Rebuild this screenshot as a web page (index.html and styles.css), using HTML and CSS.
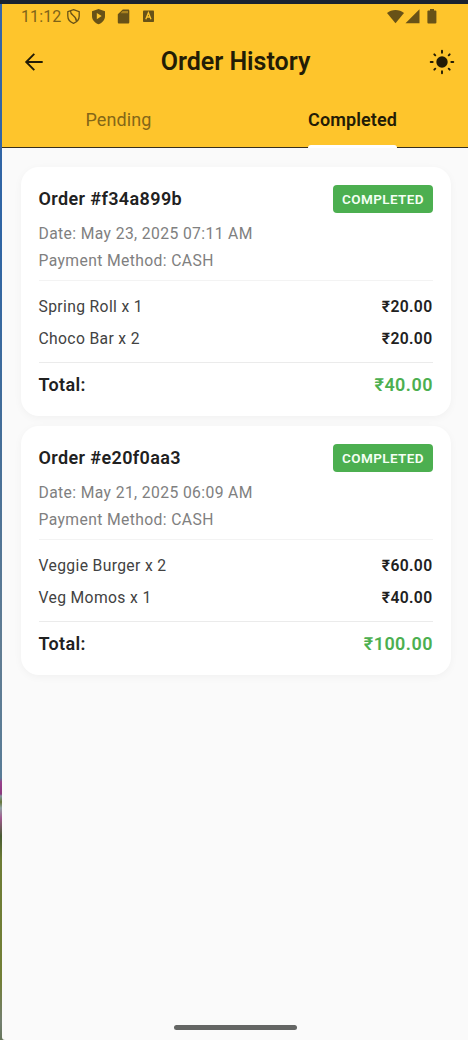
FILE: index.html
```html
<!DOCTYPE html>
<html lang="en">
<head>
<meta charset="utf-8">
<title>Order History</title>
<link rel="stylesheet" href="styles.css">
</head>
<body>
<div class="desktop">
<div class="phone">
  <header class="app-bar">
    <div class="status-bar">
      <span class="clock">11:12</span>
      <svg class="status-left" width="90" height="18" viewBox="0 0 90 18">
        <path d="M7.500 1.600 13.200 3.700V8c0 3.400-2.300 6.100-5.700 7.300C4.100 14.100 1.800 11.400 1.800 8V3.700z" fill="none" stroke="currentColor" stroke-width="1.300"/>
        <path d="M4.500 3c-.6 4.500 6.500 4.500 5.800 10" fill="none" stroke="currentColor" stroke-width="1.300"/>
        <path d="M32.500.9 39 3.300V8c0 3.800-2.700 7-6.500 8.200C28.700 15 26 11.800 26 8V3.300z" fill="currentColor"/>
        <path d="M30.800 5v6.200l4.900-3.100z" fill="#fec52c"/>
        <path d="M56.800 1.500h5.200c.8 0 1.300.5 1.300 1.300v11.400c0 .8-.5 1.300-1.300 1.300h-8.900c-.8 0-1.300-.5-1.300-1.300V6.200z" fill="currentColor"/>
        <path d="M56.500 3h5.500v2.300H54.500z" fill="#a98220"/>
        <rect x="77" y="2.500" width="11" height="11.500" rx=".8" fill="currentColor"/>
        <path d="m79.800 11.200 2.600-6.500 2.600 6.500M80.800 9h3.200" fill="none" stroke="#fec52c" stroke-width="1.300"/>
      </svg>
      <svg class="status-right" width="51" height="16" viewBox="0 0 51 16">
        <path d="M0 4C4.500.1 12.500.1 17 4L8.500 14.300z" fill="currentColor"/>
        <path d="M18.500 14.200 32.500.3v13.900z" fill="currentColor"/>
        <path d="M43 0h4v1.400h1.500c.5 0 .9.400.9.900v11.200c0 .5-.4.900-.9.900h-7.200c-.5 0-.9-.4-.9-.9V2.300c0-.5.400-.9.900-.9H43z" fill="currentColor"/>
      </svg>
    </div>
    <div class="toolbar">
      <svg class="back" width="20" height="20" viewBox="0 0 20 20"><path d="M10.300 1.900 2.200 10l8.100 8.100M2.500 10H18.700" fill="none" stroke="currentColor" stroke-width="1.900"/></svg>
      <h1 class="title">Order History</h1>
      <svg class="sun" width="26" height="26" viewBox="-13 -13 26 26">
        <circle r="5.700" fill="currentColor"/>
        <path d="M0-11.300V-9.300M0 9.300v2M-11.300 0H-9.300M9.300 0h2M-7.700-7.700-6.700-6.700M6.700 6.700l1 1M-7.700 7.700-6.700 6.700M6.700-6.700l1-1" stroke="currentColor" stroke-width="1.900" stroke-linecap="round"/>
      </svg>
    </div>
    <nav class="tabs">
      <div class="tab"><span class="tab-label">Pending</span></div>
      <div class="tab tab-active"><span class="tab-label">Completed</span></div>
    </nav>
  </header>
  <main class="orders">
    <article class="card">
      <div class="row head"><h2 class="order-id">Order #f34a899b</h2><span class="badge">COMPLETED</span></div>
      <p class="meta">Date: May 23, 2025 07:11 AM</p>
      <p class="meta">Payment Method: CASH</p>
      <div class="items">
        <div class="row item"><span>Spring Roll x 1</span><span class="price">₹20.00</span></div>
        <div class="row item"><span>Choco Bar x 2</span><span class="price">₹20.00</span></div>
      </div>
      <div class="row total"><span>Total:</span><span class="amount">₹40.00</span></div>
    </article>
    <article class="card">
      <div class="row head"><h2 class="order-id">Order #e20f0aa3</h2><span class="badge">COMPLETED</span></div>
      <p class="meta">Date: May 21, 2025 06:09 AM</p>
      <p class="meta">Payment Method: CASH</p>
      <div class="items">
        <div class="row item"><span>Veggie Burger x 2</span><span class="price">₹60.00</span></div>
        <div class="row item"><span>Veg Momos x 1</span><span class="price">₹40.00</span></div>
      </div>
      <div class="row total"><span>Total:</span><span class="amount">₹100.00</span></div>
    </article>
  </main>
  <div class="home-handle"></div>
</div>
</div>
</body>
</html>
```
FILE: styles.css
```css
* { box-sizing: border-box; margin: 0; padding: 0; }
body { width: 468px; height: 1040px; overflow: hidden; font-family: Roboto, sans-serif; }
svg { display: block; flex: none; }

.desktop {
  width: 468px;
  height: 1040px;
  padding: 4px 0 0 2px;
  background:
    linear-gradient(#1a2230, #1a2230) 0 0 / 100% 4px no-repeat,
    linear-gradient(#3565a8 0, #2f65a4 240px, #466f98 450px, #617d93 650px, #587b96 778px, #98408c 782px, #8a3a7d 794px, #8295a0 796px, #66763a 802px, #91a3a5 808px, #a0588e 818px, #485c32 836px, #6d7c35 860px, #727f36 980px, #737f70 1022px, #66755a 1040px);
}
.phone {
  display: flex;
  flex-direction: column;
  height: 1036px;
  background: #fafafa;
  border-bottom-left-radius: 3px;
  color: #212121;
}
.app-bar {
  display: flex;
  flex-direction: column;
  height: 144px;
  flex: none;
  background: #fec52c;
  border-bottom: 1px solid #38301f;
  color: #231c06;
}
.status-bar {
  display: flex;
  flex: none;
  height: 28px;
  padding: 4px 30px 0 19px;
  color: #685217;
}
.clock { width: 45px; font-size: 16px; line-height: 18px; letter-spacing: .1px; color: #7e6319; }
.status-right { margin: 1px 0 0 auto; }
.toolbar {
  display: grid;
  flex: none;
  grid-template-columns: 40px 1fr 40px;
  align-items: center;
  height: 60px;
  padding: 0 13px 0 22px;
}
.title { font-size: 25px; font-weight: 600; line-height: 32px; text-align: center; padding-right: 8px; }
.sun { justify-self: end; }
.tabs { display: grid; grid-template-columns: 1fr 1fr; flex: none; height: 55px; }
.tab { display: flex; justify-content: center; font-size: 18px; color: #846718; }
.tab-label { position: relative; line-height: 52px; padding-top: 2px; letter-spacing: .1px; }
.tab-active { padding-left: 2px; color: #231c06; font-weight: 600; }
.tab-active .tab-label::after {
  content: "";
  position: absolute;
  left: 0;
  right: 0;
  top: 52.500px;
  height: 3.500px;
  border-radius: 3px 3px 0 0;
  background: #fff;
}
.orders { display: flex; flex-direction: column; gap: 10px; padding: 18.500px 17.500px 0 18.500px; }
.card {
  height: 249px;
  padding: 18px;
  border-radius: 18px;
  background: #fff;
  box-shadow: 0 2px 9px rgba(0, 0, 0, .04);
}
.row { display: flex; justify-content: space-between; align-items: center; }
.head { height: 28px; margin-bottom: 7px; }
.order-id { font-size: 18px; font-weight: 600; letter-spacing: .38px; }
.badge {
  width: 100px;
  height: 28px;
  padding-left: 1px;
  border-radius: 4px;
  background: #4caf50;
  color: #f5fff5;
  font-size: 13.500px;
  font-weight: 600;
  line-height: 28px;
  letter-spacing: .42px;
  text-align: center;
}
.meta { font-size: 15.700px; line-height: 27px; letter-spacing: .38px; color: #808080; }
.items {
  height: 82.500px;
  margin-top: 6.500px;
  padding-top: 9px;
  border-top: 1.500px solid #f3f3f3;
  border-bottom: 1px solid #ebebeb;
}
.item { height: 32px; font-size: 15.700px; letter-spacing: .35px; color: #424242; }
.price { font-weight: 600; color: #212121; }
.total { height: 44px; font-size: 18px; font-weight: 600; letter-spacing: .35px; }
.amount { margin-right: -.4px; color: #4caf50; letter-spacing: .45px; }
.home-handle { width: 123px; height: 4.500px; margin: auto auto 10.500px; border-radius: 3px; background: #646664; }
```
